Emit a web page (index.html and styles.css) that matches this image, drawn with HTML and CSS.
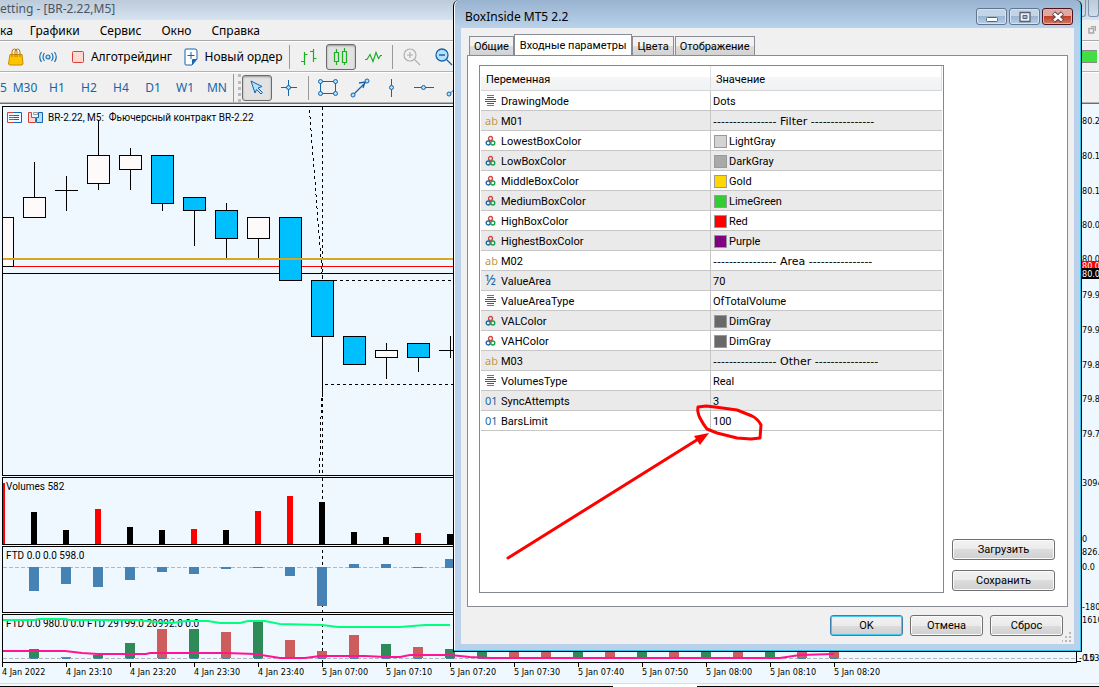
FILE: index.html
```html
<!DOCTYPE html>
<html lang="ru">
  <head>
    <meta charset="UTF-8" />
    <meta name="viewport" content="width=device-width, initial-scale=1.0" />
    <title>BR-2.22,M5</title>
    <link rel="stylesheet" href="styles.css">
  </head>
  <body>
    <svg class="defs" width="0" height="0">
      <defs>
        <symbol id="i-enum" viewBox="0 0 12 12">
          <path d="M2 .500h7M2 10.500h7" stroke="#e0494a"/>
          <path d="M2 2.500h7M0 4.500h11M0 6.500h11M2 8.500h7" stroke="#1665a8"/>
        </symbol>
        <symbol id="i-color" viewBox="0 0 12 12">
          <g fill="none" stroke-width="1.300">
            <circle cx="5.500" cy="3.500" r="2" stroke="#d9413f"/>
            <circle cx="3.200" cy="8" r="2" stroke="#1665a8"/>
            <circle cx="7.800" cy="8" r="2" stroke="#12a04a"/>
          </g>
        </symbol>
      </defs>
    </svg>

    <div class="app">
      <header class="titlebar">
        <span>etting - [BR-2.22,M5]</span>
        <div class="title-btns">
          <button aria-label="Свернуть"></button>
          <button aria-label="Закрыть"></button>
        </div>
      </header>
      <nav class="menu">
        <a href="#">ка</a>
        <a href="#">Графики</a>
        <a href="#">Сервис</a>
        <a href="#">Окно</a>
        <a href="#">Справка</a>
        <svg class="restore" width="8" height="8" viewBox="0 0 8 8"><path d="M1 2.500h4.500V7H1zM3 .500h4.500V5" fill="none" stroke="#a8a8a8" stroke-width="1.500"/></svg>
      </nav>
      <div class="toolbar">
        <button class="tool" aria-label="Маркет">
          <svg width="16" height="18" viewBox="0 0 16 18"><path d="M2 6.500h12l1 9.500-1 1H1.500l-1-1z" fill="#fdc500" stroke="#c88a00"/><path d="M4 9V4q0-3 2.500-3T9 4v5M7 9V4q0-3 2.500-3T12 4v5" fill="none" stroke="#b97a00"/></svg>
        </button>
        <button class="tool" aria-label="Сигналы">
          <svg width="18" height="12" viewBox="0 0 18 12"><g fill="none" stroke="#1a6fb0" stroke-width="1.200"><circle cx="9" cy="6" r="2" fill="#b9e3ff"/><path d="M5.500 2q-3 4 0 8M12.500 2q3 4 0 8M2.500 1q-3.500 5 0 10M15.500 1q3.500 5 0 10"/></g></svg>
        </button>
        <button class="tool wide algo">
          <svg width="12" height="12" viewBox="0 0 12 12"><rect x=".500" y=".500" width="11" height="11" rx="1" fill="#ffd9d2" stroke="#d8413c"/></svg>
          Алготрейдинг
        </button>
        <button class="tool wide order">
          <svg width="14" height="18" viewBox="0 0 14 18"><path d="M2 1h9q2 0 2 2v8l-5 6H2q-1 0-1-1V2q0-1 1-1z" fill="#fff" stroke="#1665a8"/><path d="M8 17v-5q0-1 1-1h4z" fill="#1665a8"/><path d="M3.500 7.500h7M7 4v7" stroke="#1665a8"/></svg>
          Новый ордер
        </button>
        <span class="sep"></span>
        <button class="tool type" aria-label="Бары">
          <svg width="18" height="18" viewBox="0 0 18 18"><path d="M4.500 4v13M1 13.500h3.500M4.500 6.500h3M13.500 1v13M10 3.500h3.500M13.500 10.500h3" fill="none" stroke="#1bb021" stroke-width="1.200"/></svg>
        </button>
        <button class="tool type on" aria-label="Свечи">
          <svg width="16" height="18" viewBox="0 0 16 18"><path d="M1.500 4.500h4v9h-4zM9.500 3.500h4v11h-4zM3.500 1v3.500M3.500 13.500V17M11.500 0v3.500M11.500 14.500V17" fill="none" stroke="#1bb021" stroke-width="1.200"/></svg>
        </button>
        <button class="tool type" aria-label="Линия">
          <svg width="18" height="14" viewBox="0 0 18 14"><path d="M1 9.500h2l3-5 3 7 3-9 2.500 6 2-3H18" fill="none" stroke="#1bb021" stroke-width="1.200"/></svg>
        </button>
        <span class="sep"></span>
        <button class="tool type" aria-label="Увеличить">
          <svg width="18" height="18" viewBox="0 0 18 18"><g fill="none" stroke="#b0b0b0" stroke-width="1.200"><circle cx="7" cy="7" r="6"/><path d="M11.500 11.500L17 17M4 7h6M7 4v6"/></g></svg>
        </button>
        <button class="tool type" aria-label="Уменьшить">
          <svg width="18" height="18" viewBox="0 0 18 18"><g fill="none" stroke="#1665a8" stroke-width="1.300"><circle cx="7" cy="7" r="6" fill="#b5e0ff"/><path d="M11.500 11.500L17 17M4 7h6"/></g></svg>
        </button>
        <span class="level"></span>
      </div>
      <div class="toolbar">
        <button class="tf cut">5</button>
        <button class="tf">M30</button>
        <button class="tf">H1</button>
        <button class="tf">H2</button>
        <button class="tf">H4</button>
        <button class="tf">D1</button>
        <button class="tf">W1</button>
        <button class="tf">MN</button>
        <span class="grip"></span>
        <button class="tool type on" aria-label="Курсор">
          <svg width="16" height="16" viewBox="0 0 16 16"><path d="M2 1l11 5.500-4 1.500 4.500 4.500-1.500 1.500L7.500 9.500 6 13z" fill="#b5e0ff" stroke="#1665a8"/></svg>
        </button>
        <button class="tool type" aria-label="Перекрестие">
          <svg width="18" height="18" viewBox="0 0 18 18"><path d="M1 8.500h16M8.500 1v16" stroke="#1665a8"/><circle cx="8.500" cy="8.500" r="2" fill="#b5e0ff" stroke="#1665a8"/></svg>
        </button>
        <span class="sep"></span>
        <button class="tool draw" aria-label="Прямоугольник">
          <svg width="20" height="18" viewBox="0 0 20 18"><g fill="#b5e0ff" stroke="#1665a8"><path d="M2.500 2.500h15v12h-15z" fill="none"/><circle cx="2.500" cy="2.500" r="2"/><circle cx="17.500" cy="2.500" r="2"/><circle cx="2.500" cy="14.500" r="2"/><circle cx="17.500" cy="14.500" r="2"/></g></svg>
        </button>
        <button class="tool draw" aria-label="Стрелка">
          <svg width="20" height="20" viewBox="0 0 20 20"><g fill="#b5e0ff" stroke="#1665a8"><path d="M3 17L17 3M9 5l6-1-2 6" fill="none" stroke-width="1.300"/><circle cx="3" cy="17" r="2"/><circle cx="17" cy="3" r="2"/></g></svg>
        </button>
        <button class="tool draw" aria-label="Вертикальная линия">
          <svg width="20" height="20" viewBox="0 0 20 20"><path d="M9.500 1v18" stroke="#1665a8"/><circle cx="9.500" cy="9.500" r="2" fill="#b5e0ff" stroke="#1665a8"/></svg>
        </button>
        <button class="tool draw" aria-label="Горизонтальная линия">
          <svg width="20" height="20" viewBox="0 0 20 20"><path d="M0 9.500h20" stroke="#1665a8"/><circle cx="9.500" cy="9.500" r="2" fill="#b5e0ff" stroke="#1665a8"/></svg>
        </button>
        <button class="tool draw" aria-label="Трендовая линия">
          <svg width="20" height="20" viewBox="0 0 20 20"><path d="M2 17L18 3" stroke="#1665a8"/><circle cx="3" cy="16" r="2" fill="#b5e0ff" stroke="#1665a8"/></svg>
        </button>
      </div>

      <main class="chart">
        <div class="panels">
          <section class="panel price">
            <svg width="1600" height="368" viewBox="3 107 1600 368">
              <g shape-rendering="crispEdges">
                <path d="M3 266.500h1600" stroke="#f00"/>
                <path d="M3 273.500h1600" stroke="#000"/>
                <g stroke="#000">
                  <path d="M34.500 162v35M66.500 176v35M55 190.500h23M98.500 120v70M130.500 148v42M162.500 155v56M194.500 197v49M226.500 203v55M258.500 217v41M322.500 280v117M386.500 343v36M418.500 343v29M450.500 336v22M439 350.500h23"/>
                  <g fill="#fffafa">
                    <rect x="-8.500" y="217.500" width="22" height="49"/>
                    <rect x="23.500" y="197.500" width="22" height="20"/>
                    <rect x="87.500" y="155.500" width="22" height="28"/>
                    <rect x="119.500" y="155.500" width="22" height="14"/>
                    <rect x="247.500" y="217.500" width="22" height="21"/>
                    <rect x="375.500" y="350.500" width="22" height="7"/>
                  </g>
                  <g fill="#00bfff">
                    <rect x="151.500" y="155.500" width="22" height="48"/>
                    <rect x="183.500" y="197.500" width="22" height="13"/>
                    <rect x="215.500" y="210.500" width="22" height="28"/>
                    <rect x="279.500" y="217.500" width="22" height="63"/>
                    <rect x="311.500" y="280.500" width="22" height="56"/>
                    <rect x="343.500" y="336.500" width="22" height="28"/>
                    <rect x="407.500" y="343.500" width="22" height="14"/>
                  </g>
                  <path d="M309.500 110l13 169M322.500 107v173M334 280.500h1300M325 384.500h1300M322.500 398v77M321.500 398l-2 77" fill="none" stroke-dasharray="3 3"/>
                </g>
                <path d="M3 259h1600" stroke="#daa520" stroke-width="2"/>
              </g>
              <g fill="none">
                <path d="M14 112.500H7.500v10H14M9 115.500h5M9 117.500h5M9 119.500h5" stroke="#d8413c"/>
                <path d="M14 112.500h7.500v10H14M14 115.500h5M14 117.500h5M14 119.500h5" stroke="#1665a8"/>
                <path d="M28.500 112.500h3v5h4v5h-7z" fill="#ffd9d2" stroke="#d8413c"/>
                <path d="M42.500 112.500h-4v5h-2v5h6z" fill="#b5e0ff" stroke="#1665a8"/>
                <path d="M33.500 112.500h4v2h-4z" stroke="#999"/>
              </g>
              <text x="48" y="121">BR-2.22, M5:&#160; Фьючерсный контракт BR-2.22</text>
            </svg>
          </section>
          <section class="panel volumes">
            <svg width="1600" height="66" viewBox="3 478 1600 66" shape-rendering="crispEdges">
              <path d="M322.500 478v66" stroke="#000" stroke-dasharray="3 3"/>
              <path d="M34 512v32M66 530v14M130 527v17M162 530v14M226 530v14M322 502v42M354 532v12M386 537v7M450 534v10" stroke="#000" stroke-width="6"/>
              <path d="M2 483v61M98 509v35M194 529v15M258 511v33M290 496v48M418 533v11" stroke="#f00" stroke-width="6"/>
              <text x="6" y="490">Volumes 582</text>
            </svg>
          </section>
          <section class="panel ftd">
            <svg width="1600" height="65" viewBox="3 547 1600 65" shape-rendering="crispEdges">
              <path d="M322.500 550v62" stroke="#000" stroke-dasharray="3 3"/>
              <path d="M3 567.500h1600" stroke="#b5b9bd" stroke-dasharray="4 2"/>
              <path d="M34 567v24M66 567v17M98 567v20M130 567v13M162 567v5M194 567v7M226 567v2M258 567v1M290 567v9M322 567v39M354 564v4M386 564v4M418 567v1M450 559v9" stroke="#4682b4" stroke-width="10"/>
              <text x="6" y="559">FTD 0.0 0.0 598.0</text>
            </svg>
          </section>
          <section class="panel ftd">
            <svg width="1600" height="47" viewBox="3 615 1600 47">
              <g shape-rendering="crispEdges">
                <path d="M322.500 618v44" stroke="#000" stroke-dasharray="3 3"/>
                <path d="M34 649v9M98 655v3M130 643v15M194 629v29M258 622v36M386 644v14M450 649v9M482 652v6M578 652v6M642 652v6M706 652v6M770 652v6" stroke="#2e8b57" stroke-width="10"/>
                <path d="M66 657v1M162 629v29M226 632v26M290 640v18M322 651v7M354 635v23M418 647v11M514 652v6M546 652v6M610 652v6M674 652v6M738 652v6M802 652v6M834 652v6" stroke="#cd5c5c" stroke-width="10"/>
                <path d="M3 658.500h1100" stroke="#b5b9bd" stroke-dasharray="4 2"/>
                <path d="M30 658.500h810" stroke="#4682b4" stroke-dasharray="8 24"/>
              </g>
              <text x="6" y="627">FTD 0.0 980.0 0.0 FTD 29199.0 20992.0 0.0</text>
              <path d="M3 620h32l3-1h28l3 1h68l18 2 17 1 14-2h22l12 2h20l8-2h17l15 3 42 1 16 2h62l25-2h25" fill="none" stroke="#00ff7f" stroke-width="2"/>
              <path d="M3 651h62l17 2 16 1h48l4-1h76l29 1 25 4h25l15-2h45l20 1h15l10-2h40l20 2 20 1h290l20-3 34-1" fill="none" stroke="#ff1493" stroke-width="2"/>
            </svg>
          </section>
          <svg class="times" width="1600" height="20" viewBox="2 663 1600 20">
            <path d="M2.500 663v4M66.500 663v4M130.500 663v4M194.500 663v4M258.500 663v4M322.500 663v4M386.500 663v4M450.500 663v4M514.500 663v4M578.500 663v4M642.500 663v4M706.500 663v4M770.500 663v4M834.500 663v4" stroke="#000"/>
            <text x="2" y="675">4 Jan 2022</text>
            <text x="66" y="675">4 Jan 23:10</text>
            <text x="130" y="675">4 Jan 23:20</text>
            <text x="194" y="675">4 Jan 23:30</text>
            <text x="258" y="675">4 Jan 23:40</text>
            <text x="322" y="675">5 Jan 07:00</text>
            <text x="386" y="675">5 Jan 07:10</text>
            <text x="450" y="675">5 Jan 07:20</text>
            <text x="514" y="675">5 Jan 07:30</text>
            <text x="578" y="675">5 Jan 07:40</text>
            <text x="642" y="675">5 Jan 07:50</text>
            <text x="706" y="675">5 Jan 08:00</text>
            <text x="770" y="675">5 Jan 08:10</text>
            <text x="834" y="675">5 Jan 08:20</text>
          </svg>
        </div>
        <svg class="scale" width="22" height="577" viewBox="1077 106 22 577">
          <text x="1082" y="124">80.2</text>
          <text x="1082" y="159">80.1</text>
          <text x="1082" y="194">80.1</text>
          <text x="1082" y="228">80.0</text>
          <text x="1082" y="262">80.0</text>
          <rect x="1077" y="261" width="22" height="8" fill="#f00"/>
          <text class="light" x="1082" y="269">80.0</text>
          <rect x="1077" y="268" width="22" height="11"/>
          <text class="light" x="1082" y="277">80.0</text>
          <text x="1082" y="298">79.9</text>
          <text x="1082" y="333">79.9</text>
          <text x="1082" y="368">79.8</text>
          <text x="1082" y="402">79.8</text>
          <text x="1082" y="437">79.7</text>
          <text x="1082" y="486">3094</text>
          <text x="1082" y="542">0</text>
          <text x="1082" y="555">826.</text>
          <text x="1082" y="570">0.0</text>
          <text x="1082" y="610">-180</text>
          <text x="1082" y="623">1610</text>
          <path d="M1077 661.500h4" stroke="#000"/>
          <text x="1079" y="661">-0.0</text>
          <text x="1084" y="661">153</text>
        </svg>
      </main>
      <footer class="tabline"><span></span></footer>
    </div>

    <div class="dialog" role="dialog" aria-labelledby="dlg-title">
      <div class="dialog-title">
        <span id="dlg-title">BoxInside MT5 2.2</span>
        <div class="win-btns">
          <button aria-label="Свернуть">
            <svg width="12" height="12" viewBox="0 0 12 12"><rect x=".500" y="6.500" width="11" height="4" rx="1" fill="#fff" stroke="#5a6272"/></svg>
          </button>
          <button class="max" aria-label="Развернуть">
            <svg width="12" height="12" viewBox="0 0 12 12"><path d="M1 1.500h10v9H1z" fill="#e8eef5" stroke="#5a6272" stroke-width="1.300"/><path d="M4 4.500h4v3H4z" fill="#9fb8d4" stroke="#5a6272"/></svg>
          </button>
          <button class="close" aria-label="Закрыть">
            <svg width="12" height="12" viewBox="0 0 12 12"><path d="M1.500 2l9 8M10.500 2l-9 8" stroke="#59434c" stroke-width="4.500"/><path d="M2 2.500l8 7M10 2.500l-8 7" stroke="#fff" stroke-width="2.500"/></svg>
          </button>
        </div>
      </div>
      <div class="client">
        <div class="tabs" role="tablist">
          <button class="tab" role="tab">Общие</button>
          <button class="tab active" role="tab" aria-selected="true">Входные параметры</button>
          <button class="tab" role="tab">Цвета</button>
          <button class="tab" role="tab">Отображение</button>
        </div>
        <div class="page">
          <div class="list">
            <table>
              <thead>
                <tr><th class="name">Переменная</th><th>Значение</th></tr>
              </thead>
              <tbody>
                <tr><td><svg class="ico"><use href="#i-enum"/></svg>DrawingMode</td><td>Dots</td></tr>
                <tr><td><span class="ico ab">ab</span>M01</td><td class="group">---------------- Filter ----------------</td></tr>
                <tr><td><svg class="ico"><use href="#i-color"/></svg>LowestBoxColor</td><td><i class="sw lightgray"></i>LightGray</td></tr>
                <tr><td><svg class="ico"><use href="#i-color"/></svg>LowBoxColor</td><td><i class="sw darkgray"></i>DarkGray</td></tr>
                <tr><td><svg class="ico"><use href="#i-color"/></svg>MiddleBoxColor</td><td><i class="sw gold"></i>Gold</td></tr>
                <tr><td><svg class="ico"><use href="#i-color"/></svg>MediumBoxColor</td><td><i class="sw limegreen"></i>LimeGreen</td></tr>
                <tr><td><svg class="ico"><use href="#i-color"/></svg>HighBoxColor</td><td><i class="sw red"></i>Red</td></tr>
                <tr><td><svg class="ico"><use href="#i-color"/></svg>HighestBoxColor</td><td><i class="sw purple"></i>Purple</td></tr>
                <tr><td><span class="ico ab">ab</span>M02</td><td class="group">---------------- Area ----------------</td></tr>
                <tr><td><span class="ico num">½</span>ValueArea</td><td>70</td></tr>
                <tr><td><svg class="ico"><use href="#i-enum"/></svg>ValueAreaType</td><td>OfTotalVolume</td></tr>
                <tr><td><svg class="ico"><use href="#i-color"/></svg>VALColor</td><td><i class="sw dimgray"></i>DimGray</td></tr>
                <tr><td><svg class="ico"><use href="#i-color"/></svg>VAHColor</td><td><i class="sw dimgray"></i>DimGray</td></tr>
                <tr><td><span class="ico ab">ab</span>M03</td><td class="group">---------------- Other ----------------</td></tr>
                <tr><td><svg class="ico"><use href="#i-enum"/></svg>VolumesType</td><td>Real</td></tr>
                <tr><td><span class="ico int">01</span>SyncAttempts</td><td>3</td></tr>
                <tr><td><span class="ico int">01</span>BarsLimit</td><td>100</td></tr>
              </tbody>
            </table>
          </div>
          <div class="side">
            <button class="btn">Загрузить</button>
            <button class="btn">Сохранить</button>
          </div>
        </div>
        <div class="actions">
          <button class="btn ok">OK</button>
          <button class="btn">Отмена</button>
          <button class="btn">Сброс</button>
          <svg class="resize" width="10" height="10" viewBox="0 0 10 10"><path d="M7 1h2M7 5h2M7 9h2M3 5h2M3 9h2M0 9h1" stroke="#b8b8b8" stroke-width="2"/></svg>
        </div>
      </div>
      <!-- hand-drawn mark around BarsLimit -->
      <svg class="mark" width="270" height="160" viewBox="500 402 270 160">
        <path d="M715 407l-9-1-8 1q-1 5 2 11 3 6 7 11l10 4 20 5 14 1 9-1 1-13q-3-6-9-9l-15-6z" fill="none" stroke="#f00" stroke-width="3" stroke-linejoin="round"/>
        <path d="M508 558L700 438" stroke="#f00" stroke-width="3" stroke-linecap="round"/>
        <path d="M709 433l-15 3 6 9z" fill="#f00"/>
      </svg>
    </div>
  </body>
</html>
```

FILE: styles.css
```css
*{
    margin: 0;
    padding: 0;
    box-sizing: border-box;
}
body{
    height: 100vh;
    overflow: hidden;
    position: relative;
    background-color: #f0f0f0;
    color: black;
    font-family: "Noto Sans", "Open Sans", sans-serif;
    font-size: 12px;
}
button{
    font: inherit;
    color: inherit;
    border: none;
    background: none;
}
.defs{
    position: absolute;
}

/* main window */
.app{
    height: 100%;
    display: flex;
    flex-direction: column;
}
.titlebar{
    height: 20px;
    flex: none;
    display: flex;
    justify-content: space-between;
    line-height: 18px;
    color: #4b5563;
    background: linear-gradient(#bccad9, #d6e3f0);
}
.title-btns{
    display: flex;
    gap: 2px;
}
.title-btns button{
    width: 11px;
    height: 17px;
    border: 1px solid #8292a8;
    border-top: none;
    border-radius: 0 0 3px 3px;
}
.menu{
    height: 21px;
    flex: none;
    display: flex;
    align-items: center;
    gap: 20px;
    border-bottom: 1px solid #a8a8a8;
}
.menu a{
    color: black;
    text-decoration: none;
}
.menu a:first-child{
    margin-right: -3px;
}
.restore{
    margin-left: auto;
    margin-right: 3px;
}
.toolbar{
    height: 31px;
    flex: none;
    display: flex;
    align-items: center;
    white-space: nowrap;
    overflow: hidden;
    border-top: 1px solid white;
    border-bottom: 1px solid #b4b4b4;
}
.tool{
    width: 32px;
    height: 26px;
    flex: none;
    display: flex;
    align-items: center;
    justify-content: center;
    border-radius: 3px;
}
.tool.wide{
    gap: 7px;
}
.algo{
    width: 116px;
}
.order{
    width: 106px;
}
.type{
    width: 30px;
    margin: 0 1px;
}
.on{
    border: 1px solid #6b6b6b;
    background-color: #e2e2e2;
    box-shadow: inset 0 1px 2px #999;
}
.sep{
    width: 1px;
    height: 24px;
    margin: 0 3px;
    flex: none;
    background-color: #999;
}
.level{
    width: 16px;
    height: 13px;
    margin-left: auto;
    margin-right: 2px;
    flex: none;
    background-color: #40e040;
    border-top: 1px solid #888;
    border-bottom: 1px solid #888;
}
.tf{
    width: 32px;
    flex: none;
    color: #1665a8;
}
.cut{
    width: 9px;
    text-align: left;
}
.grip{
    width: 8px;
    height: 28px;
    flex: none;
    border-left: 1px solid #999;
    border-right: 3px dotted #bbb;
}

/* chart */
.chart{
    flex: 1;
    min-height: 0;
    display: flex;
    padding: 2px 0 0 2px;
    border-top: 1px solid #6e6e6e;
    background-color: #f0f8ff;
    overflow: hidden;
}
.chart svg{
    display: block;
}
.chart text{
    font-family: Roboto, sans-serif;
    font-size: 10px;
}
.chart .times text,
.chart .scale text{
    font-family: "DejaVu Sans Condensed", "DejaVu Sans", sans-serif;
    font-stretch: condensed;
    font-size: 9px;
}
.panels{
    flex: 1;
    min-width: 0;
    display: flex;
    flex-direction: column;
    gap: 1px;
    overflow: hidden;
}
.panel{
    flex: none;
    border: 1px solid black;
    overflow: hidden;
}
.price{
    flex: 1;
}
.times{
    flex: none;
    margin-top: -1px;
}
.scale{
    flex: none;
}
.chart .light{
    fill: white;
}
.tabline{
    height: 4px;
    flex: none;
    border-top: 1px solid #ddd;
    border-bottom: 1px solid black;
    background-color: #f7f7f7;
}
.tabline span{
    display: block;
    width: 84px;
    height: 3px;
    margin-left: 613px;
    background-color: white;
}

/* dialog */
.dialog{
    position: absolute;
    top: 0;
    right: 17px;
    bottom: 35px;
    left: 453px;
    display: flex;
    flex-direction: column;
    padding: 0 7px 7px;
    border: 1px solid black;
    border-top: none;
    border-radius: 6px 6px 0 0;
    background: linear-gradient(#98b3d0, #b9d1ea 27px, #b9d1ea);
    box-shadow: inset -1px -1px #2bc8ee, inset 1px 0 white;
    font-family: Roboto, sans-serif;
    font-size: 11px;
}
.dialog-title{
    height: 28px;
    flex: none;
    display: flex;
    justify-content: space-between;
    padding: 8px 1px 0 4px;
    font-family: "Noto Sans", sans-serif;
    font-size: 12px;
    line-height: 17px;
}
.win-btns{
    display: flex;
    gap: 2px;
}
.win-btns button{
    width: 31px;
    height: 17px;
    display: flex;
    align-items: center;
    justify-content: center;
    border: 1px solid #5f7590;
    border-radius: 3px;
    background: linear-gradient(#c3d4e6 45%, #9db6d1 50%, #b6cde5);
    box-shadow: inset 0 0 0 1px #d5e2ef;
}
.win-btns .close{
    border-color: #4a1420;
    background: linear-gradient(#e2a79e 45%, #c1402b 50%, #d27a60);
    box-shadow: inset 0 0 0 1px #e5b0a6;
}
.client{
    flex: 1;
    min-height: 0;
    display: flex;
    flex-direction: column;
    padding: 6px 6px 0;
    background-color: #f0f0f0;
}
.tabs{
    display: flex;
    align-items: flex-end;
    height: 22px;
    padding-left: 2px;
    margin-bottom: -1px;
}
.tab{
    height: 20px;
    padding: 0 4px;
    border: 1px solid #898c95;
    margin-right: 1px;
    background: linear-gradient(#f2f2f2 50%, #dddddd 50%, #d2d2d2);
}
.tab.active{
    height: 22px;
    padding: 0 5px 1px;
    margin: 0 0 0 -1px;
    border-bottom: none;
    background: white;
}
.page{
    flex: 1;
    min-height: 0;
    display: flex;
    gap: 8px;
    padding: 9px 12px 13px 11px;
    border: 1px solid #898c95;
    background-color: white;
}
.list{
    flex: 1;
    border: 1px solid #828790;
    padding: 0 1px;
    overflow: hidden;
}
table{
    width: 100%;
    border-collapse: separate;
    border-spacing: 0;
    table-layout: fixed;
}
th{
    height: 25px;
    padding: 2px 5px 0;
    text-align: left;
    font-weight: normal;
    border-right: 1px solid #dedfe1;
    border-bottom: 1px solid #d5d5d5;
    background: linear-gradient(white 45%, #f5f6f7 45%, #f1f2f4);
}
.name{
    width: 230px;
}
td{
    height: 20px;
    padding: 2px 2px 0;
    line-height: 17px;
    white-space: nowrap;
    border-bottom: 1px solid #c6c6c6;
}
td:first-child{
    padding: 2px 4px 0;
    border-right: 1px solid #c6c6c6;
}
.group{
    font-family: "DejaVu Sans", sans-serif;
}
tbody tr:nth-child(even){
    background-color: #eaeaea;
}
.ico{
    display: inline-block;
    width: 12px;
    height: 12px;
    margin-right: 4px;
    vertical-align: -2px;
    line-height: 12px;
}
.ab,
.num,
.int{
    color: #1665a8;
    font-family: "Noto Sans", sans-serif;
    vertical-align: 0;
}
.ab{
    color: #c29a3c;
}
.num{
    font-size: 14px;
}
.sw{
    display: inline-block;
    width: 13px;
    height: 13px;
    margin: 0 2px 0 1px;
    vertical-align: -3px;
    border: 1px solid #9a9a9a;
}
.lightgray{
    background-color: lightgray;
}
.darkgray{
    background-color: darkgray;
}
.gold{
    background-color: gold;
}
.limegreen{
    background-color: limegreen;
}
.red{
    background-color: red;
}
.purple{
    background-color: purple;
}
.dimgray{
    background-color: dimgray;
}
.side{
    width: 103px;
    display: flex;
    flex-direction: column;
    justify-content: flex-end;
    gap: 10px;
    padding-bottom: 2px;
}
.btn{
    height: 21px;
    border: 1px solid #707070;
    border-radius: 3px;
    background: linear-gradient(#f2f2f2, #ebebeb 50%, #dddddd 50%, #cfcfcf);
    box-shadow: inset 0 0 0 1px #fbfbfb;
}
.actions{
    position: relative;
    display: flex;
    justify-content: flex-end;
    gap: 7px;
    padding: 8px 5px 8px;
}
.actions .btn{
    width: 73px;
}
.actions .ok{
    border-color: #3c7fb1;
    box-shadow: inset 0 0 0 1px #48c8ee;
}
.resize{
    position: absolute;
    right: -4px;
    bottom: 2px;
}
.mark{
    position: absolute;
    left: 46px;
    top: 402px;
    pointer-events: none;
}
```
